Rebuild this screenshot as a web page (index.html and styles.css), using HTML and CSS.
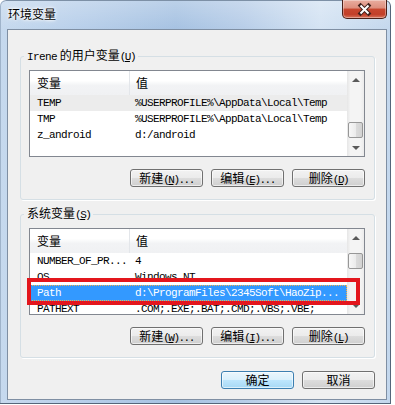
FILE: index.html
```html
<!DOCTYPE html>
<html lang="zh-CN">
<head>
  <meta charset="UTF-8">
  <title>环境变量</title>
  <link rel="stylesheet" href="styles.css">
</head>
<body>
  <div class="window">
    <div class="titlebar">
      <span class="title">环境变量</span>
      <button class="close" title="关闭">
        <svg width="43" height="17" viewBox="0 0 43 17">
          <path d="M17.5 4.5 L25.5 12.5 M25.5 4.5 L17.5 12.5" stroke="#40221d" stroke-width="4" stroke-linecap="square"/>
          <path d="M17.5 4.5 L25.5 12.5 M25.5 4.5 L17.5 12.5" stroke="#fff" stroke-width="2"/>
        </svg>
      </button>
    </div>

    <div class="client">
      <fieldset class="group">
        <legend><span class="en">Irene</span> 的用户变量<span class="key">(<u>U</u>)</span></legend>
        <div class="listview">
          <div class="list-body">
            <div class="list-header">
              <div class="col1">变量</div>
              <div class="col2">值</div>
            </div>
            <div class="row inactive"><span class="col1">TEMP</span><span class="col2">%USERPROFILE%\AppData\Local\Temp</span></div>
            <div class="row"><span class="col1">TMP</span><span class="col2">%USERPROFILE%\AppData\Local\Temp</span></div>
            <div class="row"><span class="col1">z_android</span><span class="col2">d:/android</span></div>
          </div>
          <div class="scrollbar">
            <div class="arrow up"></div>
            <div class="track"><div class="thumb" style="margin-top:34px"></div></div>
            <div class="arrow down"></div>
          </div>
        </div>
        <div class="buttons">
          <button class="btn">新建<span class="key">(<u>N</u>)...</span></button>
          <button class="btn">编辑<span class="key">(<u>E</u>)...</span></button>
          <button class="btn">删除<span class="key">(<u>D</u>)</span></button>
        </div>
      </fieldset>

      <fieldset class="group second">
        <legend>系统变量<span class="key">(<u>S</u>)</span></legend>
        <div class="listview">
          <div class="list-body">
            <div class="list-header">
              <div class="col1">变量</div>
              <div class="col2">值</div>
            </div>
            <div class="row"><span class="col1">NUMBER_OF_PR...</span><span class="col2">4</span></div>
            <div class="row"><span class="col1">OS</span><span class="col2">Windows_NT</span></div>
            <div class="row selected"><span class="col1">Path</span><span class="col2">d:\ProgramFiles\2345Soft\HaoZip...</span></div>
            <div class="row"><span class="col1">PATHEXT</span><span class="col2">.COM;.EXE;.BAT;.CMD;.VBS;.VBE;</span></div>
          </div>
          <div class="scrollbar">
            <div class="arrow up"></div>
            <div class="track"><div class="thumb" style="margin-top:7px"></div></div>
            <div class="arrow down"></div>
          </div>
          <div class="mark"></div>
        </div>
        <div class="buttons">
          <button class="btn">新建<span class="key">(<u>W</u>)...</span></button>
          <button class="btn">编辑<span class="key">(<u>I</u>)...</span></button>
          <button class="btn">删除<span class="key">(<u>L</u>)</span></button>
        </div>
      </fieldset>

      <div class="dialog-buttons">
        <button class="btn default">确定</button>
        <button class="btn">取消</button>
      </div>
    </div>
  </div>
</body>
</html>
```

FILE: styles.css
```css
body {
  margin: 0;
  background: #ffffff;
  font-family: "Noto Sans CJK SC", sans-serif;
  font-size: 12px;
  color: #000;
}

.window {
  width: 391px;
  height: 404px;
  border-radius: 6px 6px 0 0;
  background:
    linear-gradient(to bottom, rgba(255,255,255,0.25), rgba(255,255,255,0) 30px),
    linear-gradient(to right, #c6d9ee 0%, #b8cfea 20%, #a6c2e2 45%, #b7cde8 62%, #d4e3f3 82%, #c3d7ed 100%);
  box-shadow: inset -1px 0 #55667a, inset 0 -1px #55667a, inset 1px 0 #9fb3ca, inset 0 1px #7d90a6;
}

.titlebar {
  height: 29px;
  display: flex;
  justify-content: space-between;
  align-items: flex-start;
}

.title {
  padding: 6px 0 0 8px;
  line-height: 16px;
  font-size: 12px;
  text-shadow: 0 0 5px #fff, 0 0 3px #fff, 0 0 2px #fff;
}

.close {
  width: 45px;
  height: 19px;
  margin-right: 4px;
  padding: 0;
  border: 1px solid #4a2019;
  border-top: none;
  border-radius: 0 0 5px 5px;
  background: linear-gradient(#e9ad9f 0%, #dd8e7d 45%, #c8472f 50%, #c23f29 80%, #d8745c 100%);
  box-shadow: inset 0 0 0 1px rgba(255,255,255,0.35);
  display: flex;
  align-items: center;
  justify-content: center;
}

.client {
  margin: 0 4px 0 7px;
  height: 371px;
  box-sizing: border-box;
  border: 1px solid #7f8fa3;
  background: #f0f0f0;
  overflow: hidden;
}

.group {
  margin: 18px 11px 0 12px;
  padding: 6px 9px 12px 8px;
  border: 1px solid #d5dfe5;
  border-radius: 3px;
  box-shadow: 1px 1px 0 #ffffff;
  min-width: 0;
}

.group.second {
  margin-top: 6px;
}

.group legend {
  margin-left: -5px;
  padding: 0 3px;
  line-height: 14px;
  font-size: 12px;
}

.en {
  font-family: "Liberation Mono", monospace;
  font-size: 11px;
  letter-spacing: -0.6px;
}

.key {
  font-family: "Liberation Mono", monospace;
  font-size: 11px;
  letter-spacing: -1.5px;
}

.listview {
  position: relative;
  display: flex;
  height: 87px;
  box-sizing: border-box;
  border: 1px solid #828790;
  background: #ffffff;
}

.list-body {
  flex: 1;
  overflow: hidden;
}

.list-header {
  display: flex;
  height: 24px;
  line-height: 24px;
  background: linear-gradient(#ffffff 0%, #ffffff 40%, #f2f3f5 60%, #f0f1f3 100%);
}

.list-header .col1 {
  width: 100px;
  box-sizing: border-box;
  padding-left: 7px;
  border-right: 1px solid #e3e6ea;
}

.list-header .col2 {
  padding-left: 6px;
}

.row {
  display: flex;
  height: 16px;
  line-height: 16px;
  font-family: "Liberation Mono", monospace;
  font-size: 11px;
  letter-spacing: -0.6px;
  white-space: nowrap;
}

.row .col1 {
  width: 100px;
  flex: none;
  box-sizing: border-box;
  padding-left: 7px;
  overflow: hidden;
}

.row .col2 {
  padding-left: 5px;
}

.row.inactive {
  background: #ececec;
}

.row.selected {
  background: #3399ff;
  color: #fff;
  outline: 1px dotted #f4b04a;
  outline-offset: -1px;
}

.scrollbar {
  width: 17px;
  display: flex;
  flex-direction: column;
  background: linear-gradient(to right, #e6e6e6, #f4f4f4 20%, #f4f4f4 80%, #ebebeb);
}

.arrow {
  height: 17px;
  display: flex;
  align-items: center;
  justify-content: center;
}

.arrow::before {
  content: "";
  border-left: 4px solid transparent;
  border-right: 4px solid transparent;
}

.arrow.up::before {
  border-bottom: 4px solid #5a5a5a;
}

.arrow.down::before {
  border-top: 4px solid #5a5a5a;
}

.track {
  flex: 1;
}

.thumb {
  height: 16px;
  margin: 0 1px;
  box-sizing: border-box;
  border: 1px solid #979797;
  border-radius: 2px;
  background: linear-gradient(to right, #f7f7f7 0%, #ececec 50%, #dcdcdc 50%, #d2d2d2 100%);
}

.mark {
  position: absolute;
  left: -3px;
  top: 49px;
  width: 333px;
  height: 27px;
  box-sizing: border-box;
  border: 4px solid #e3161d;
}

.buttons,
.dialog-buttons {
  display: flex;
  justify-content: flex-end;
  gap: 8px;
}

.buttons {
  margin-top: 12px;
}

.dialog-buttons {
  margin: 13px 11px 0 0;
}

.btn {
  width: 73px;
  height: 18px;
  padding: 0;
  border: 1px solid #707070;
  border-radius: 3px;
  background: linear-gradient(#f2f2f2 0%, #ebebeb 50%, #dddddd 50%, #cfcfcf 100%);
  box-shadow: inset 0 0 0 1px rgba(255,255,255,0.6);
  font-family: "Noto Sans CJK SC", sans-serif;
  font-size: 12px;
  line-height: 16px;
  color: #000;
}

.btn.default {
  border-color: #3c7fb1;
  background: linear-gradient(#eaf6fd 0%, #d9f0fc 50%, #bee6fd 50%, #a7d9f5 100%);
}
```
